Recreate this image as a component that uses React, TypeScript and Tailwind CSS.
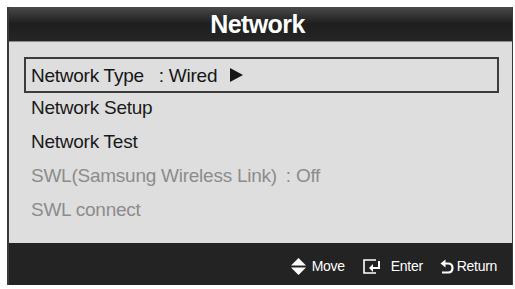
import React from 'react';

const MoveIcon = () => (
  <svg width="15" height="17" viewBox="0 0 15 17" className="block">
    <path d="M7.5 0 L15 7.5 L0 7.5 Z" fill="#fff" />
    <path d="M0 9.5 L15 9.5 L7.5 17 Z" fill="#fff" />
  </svg>
);

const EnterIcon = () => (
  <svg width="20" height="15" viewBox="0 0 20 15" className="block">
    <path d="M13 1 H1 V14 H13" fill="none" stroke="#fff" strokeWidth="1.6" />
    <path d="M16 2 V9 H9" fill="none" stroke="#fff" strokeWidth="2" />
    <path d="M10 5 L6 9 L10 13 Z" fill="#fff" />
  </svg>
);

const ReturnIcon = () => (
  <svg width="14" height="15" viewBox="0 0 14 15" className="block">
    <path d="M4 4.5 H8 C11 4.5 12.5 6.5 12.5 9 C12.5 11.5 11 13.5 8 13.5 H2" fill="none" stroke="#fff" strokeWidth="2.2" />
    <path d="M5.5 0.5 L0.5 4.5 L5.5 8.5 Z" fill="#fff" />
  </svg>
);

const rowText = "text-[19px] tracking-[-0.25px] leading-none";

const App: React.FC = () => {
  return (
    <div className="w-[515px] h-[289px] bg-white pt-[7px] pl-[7px] pr-[2px] pb-[4px] font-['Liberation_Sans',Arial,sans-serif]">
      <div className="flex flex-col h-full border-l-2 border-r border-[#3a3a3a]">
        <div className="h-[35px] flex items-center justify-center pr-[6px] pt-[1px] bg-gradient-to-b from-[#4a4a4a] via-[#1e1e1e] to-[#262626] border-b border-[#8a8a8a]">
          <span className="text-white font-bold text-[25px] tracking-[-0.6px] leading-none">Network</span>
        </div>

        <div className="flex-1 bg-[#dedede] pt-[15px] pl-[15px] pr-[13px]">
          <div className="h-[36px] border-2 border-[#3c3c3c] flex items-center pl-[5px] text-[#161616]">
            <span className={rowText}>Network Type</span>
            <span className={`${rowText} ml-[15px]`}>: Wired</span>
            <svg width="13" height="14" viewBox="0 0 13 14" className="ml-[13px]">
              <path d="M0 0 L13 7 L0 14 Z" fill="#161616" />
            </svg>
          </div>
          <div className="-mt-[3px] flex flex-col pl-[7px]">
            <div className={`h-[34px] flex items-center text-[#1a1a1a] ${rowText}`}>Network Setup</div>
            <div className={`h-[34px] flex items-center text-[#1a1a1a] ${rowText}`}>Network Test</div>
            <div className={`h-[34px] flex items-center text-[#8c8c8c] ${rowText}`}>
              SWL(Samsung Wireless Link)<span className="ml-[9px]">: Off</span>
            </div>
            <div className={`h-[34px] flex items-center text-[#8c8c8c] ${rowText}`}>SWL connect</div>
          </div>
        </div>

        <div className="h-[42px] bg-[#232323] flex items-center justify-end pr-[15px] pt-[5px] text-white text-[14px] tracking-[-0.3px]">
          <MoveIcon />
          <span className="ml-[6px]">Move</span>
          <span className="ml-[18px]"><EnterIcon /></span>
          <span className="ml-[8px]">Enter</span>
          <span className="ml-[17px]"><ReturnIcon /></span>
          <span className="ml-[3px]">Return</span>
        </div>
      </div>
    </div>
  );
};

export default App;
